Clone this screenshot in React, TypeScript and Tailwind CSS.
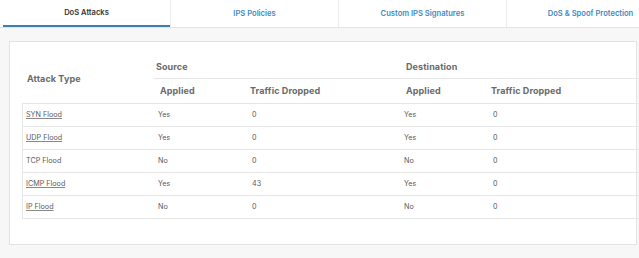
import React from "react";

const tabs = ["DoS Attacks", "IPS Policies", "Custom IPS Signatures", "DoS & Spoof Protection"];

const rows = [
  { name: "SYN Flood", link: true, srcApplied: "Yes", srcDropped: "0", dstApplied: "Yes", dstDropped: "0" },
  { name: "UDP Flood", link: true, srcApplied: "Yes", srcDropped: "0", dstApplied: "Yes", dstDropped: "0" },
  { name: "TCP Flood", link: false, srcApplied: "No", srcDropped: "0", dstApplied: "No", dstDropped: "0" },
  { name: "ICMP Flood", link: true, srcApplied: "Yes", srcDropped: "43", dstApplied: "Yes", dstDropped: "0" },
  { name: "IP Flood", link: true, srcApplied: "No", srcDropped: "0", dstApplied: "No", dstDropped: "0" },
];

export default function App() {
  return (
    <div className="w-[639px] h-[258px] overflow-hidden bg-[#f7f7f7] font-['Inter',sans-serif]">
      {/* tab bar */}
      <div className="flex h-[28px] bg-white border-b border-[#e4e4e4] pl-[3px]">
        {tabs.map((t, i) => (
          <div
            key={t}
            className={
              i === 0
                ? "w-[167px] shrink-0 flex items-center justify-center border-b-2 border-[#3b7fb6] text-[7.6px] font-semibold text-[#333]"
                : "w-[168px] shrink-0 flex items-center justify-center border-l border-[#ececec] text-[7.6px] font-semibold text-[#3d8ac4]"
            }
          >
            {t}
          </div>
        ))}
      </div>

      {/* card */}
      <div className="ml-[9px] mt-[13px] h-[204px] w-[628px] bg-white border border-[#e2e2e2] pt-[13px] pl-[12px]">
        <div className="w-[640px]">
          {/* header */}
          <div className="grid grid-cols-[132px_1fr] h-[48px] text-[9px] font-bold text-[#6a6a6a] tracking-[0.1px]">
            <div className="flex items-center pl-[5px]">Attack Type</div>
            <div className="flex flex-col">
              <div className="grid grid-cols-[252px_1fr] h-[24px] border-b border-[#e6e6e6] items-center">
                <div className="pl-[2px]">Source</div>
                <div>Destination</div>
              </div>
              <div className="grid grid-cols-[96px_156px_85px_1fr] h-[24px] items-center">
                <div className="pl-[6px]">Applied</div>
                <div>Traffic Dropped</div>
                <div>Applied</div>
                <div>Traffic Dropped</div>
              </div>
            </div>
          </div>

          {/* body */}
          <div className="border-l border-t border-[#e6e6e6]">
            {rows.map((r) => (
              <div
                key={r.name}
                className="grid grid-cols-[135px_94px_152px_89px_1fr] h-[23px] items-center border-b border-[#e6e6e6] text-[7.2px] text-[#5a5a5a]"
              >
                <div className="pl-[3px]">
                  <span className={r.link ? "underline underline-offset-[1px] decoration-[#888]" : ""}>{r.name}</span>
                </div>
                <div>{r.srcApplied}</div>
                <div>{r.srcDropped}</div>
                <div>{r.dstApplied}</div>
                <div>{r.dstDropped}</div>
              </div>
            ))}
          </div>
        </div>
      </div>
    </div>
  );
}
